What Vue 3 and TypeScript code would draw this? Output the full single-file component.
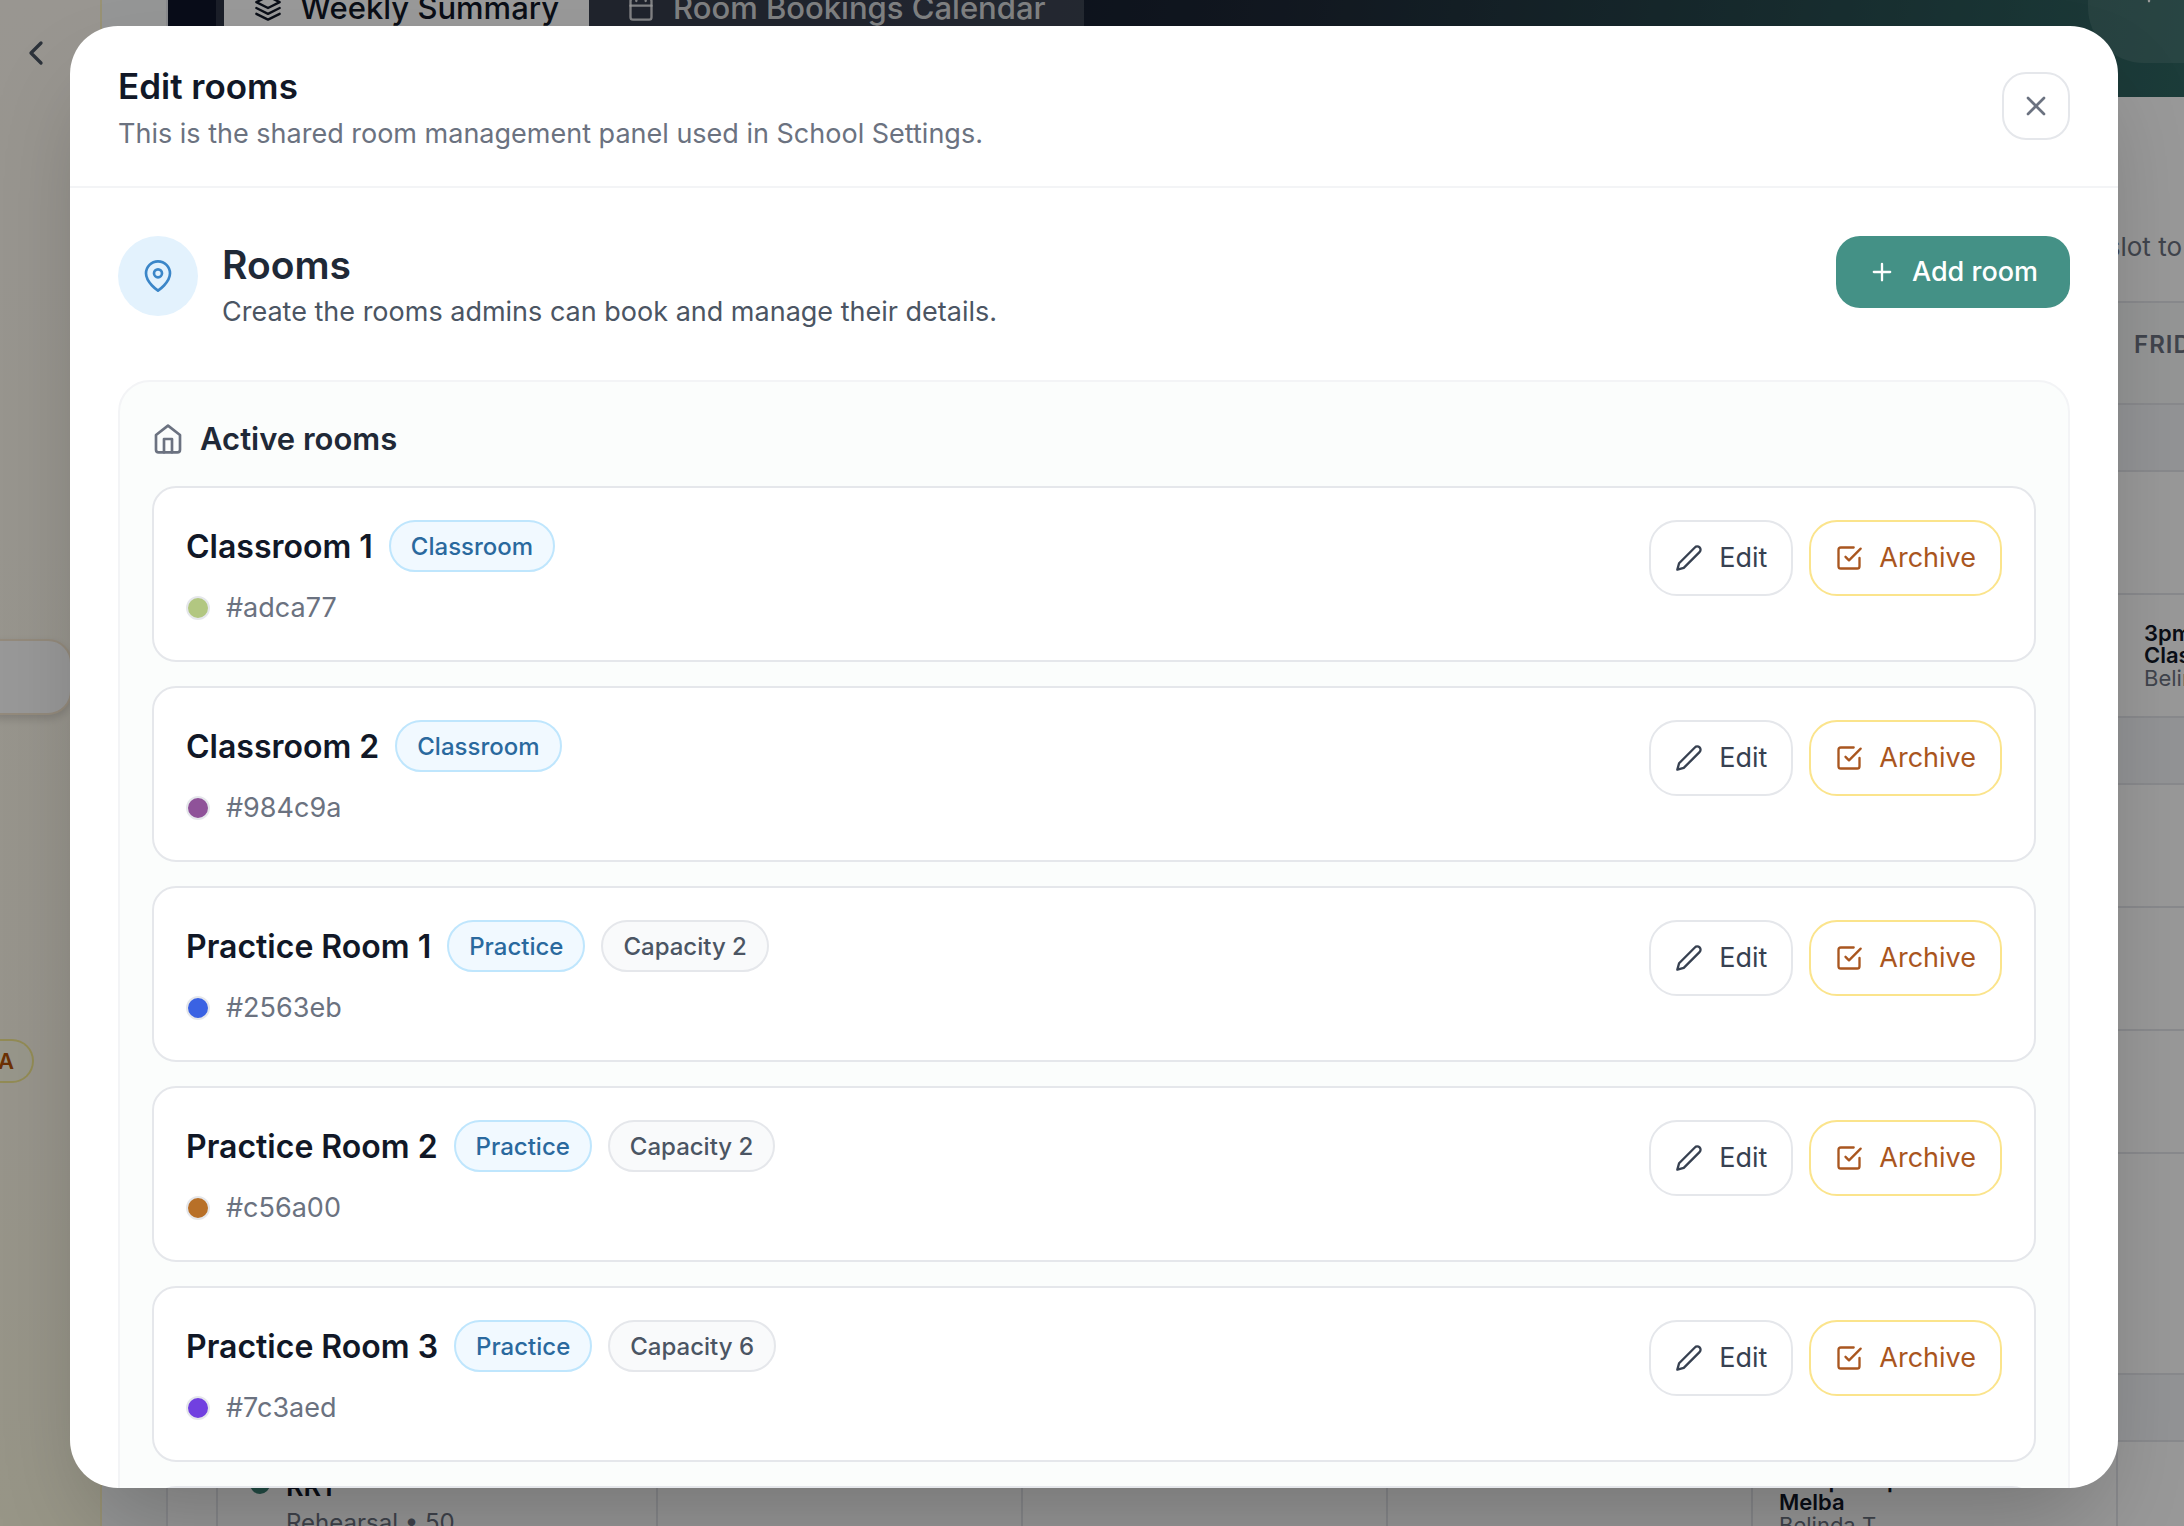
<script setup lang="ts">
interface Room {
  name: string
  kind: string
  capacity?: number
  color: string
  swatch: string
}

interface CalendarCell {
  time: string
  title: string
  person: string
}

interface CalendarRow {
  size: 'band' | 'slot' | 'tall'
  friday?: CalendarCell
}

const rooms: Room[] = [
  { name: 'Classroom 1', kind: 'Classroom', color: '#adca77', swatch: '#b2c781' },
  { name: 'Classroom 2', kind: 'Classroom', color: '#984c9a', swatch: '#8f5299' },
  { name: 'Practice Room 1', kind: 'Practice', capacity: 2, color: '#2563eb', swatch: '#3a62e3' },
  { name: 'Practice Room 2', kind: 'Practice', capacity: 2, color: '#c56a00', swatch: '#b87028' },
  { name: 'Practice Room 3', kind: 'Practice', capacity: 6, color: '#7c3aed', swatch: '#7140e0' },
]

const calendarRows: CalendarRow[] = [
  { size: 'band' },
  { size: 'slot' },
  { size: 'slot', friday: { time: '3pm', title: 'Classroom', person: 'Belinda T' } },
  { size: 'band' },
  { size: 'slot' },
  { size: 'slot' },
  { size: 'slot' },
  { size: 'tall' },
  { size: 'band' },
]
</script>

<template>
  <div class="app">
    <aside class="sidebar">
      <button class="collapse" type="button" aria-label="Collapse sidebar">
        <svg class="icon-xl" viewBox="0 0 24 24"><path d="M15 18l-6-6 6-6" /></svg>
      </button>
      <div class="side-card"></div>
      <span class="side-pill">A</span>
    </aside>

    <main class="main">
      <div class="board">
        <header class="hero">
          <nav class="tabs">
            <button class="tab tab-active" type="button">
              <svg class="icon-md" viewBox="0 0 24 24">
                <path d="M12 2 2 7l10 5 10-5-10-5z" />
                <path d="M2 12l10 5 10-5" />
                <path d="M2 17l10 5 10-5" />
              </svg>
              Weekly Summary
            </button>
            <button class="tab" type="button">
              <svg class="icon-md" viewBox="0 0 24 24">
                <rect x="3" y="4" width="18" height="18" rx="2" />
                <path d="M16 2v4M8 2v4M3 10h18" />
              </svg>
              Room Bookings Calendar
            </button>
          </nav>
          <button class="hero-action" type="button" aria-label="Add booking">
            <svg class="icon-md" viewBox="0 0 24 24"><path d="M12 5v14M5 12h14" /></svg>
          </button>
        </header>
        <p class="hint">slot to</p>

        <table class="calendar">
          <colgroup>
            <col class="col-room" />
            <col v-for="n in 5" :key="n" class="col-day" />
          </colgroup>
          <thead>
            <tr class="row-head">
              <th colspan="5"></th>
              <th scope="col">Friday</th>
            </tr>
          </thead>
          <tbody>
            <tr v-for="(row, i) in calendarRows" :key="i" :class="'row-' + row.size">
              <td colspan="5"></td>
              <td>
                <div v-if="row.friday" class="booking">
                  <strong>{{ row.friday.time }}</strong>
                  <strong>{{ row.friday.title }}</strong>
                  <span>{{ row.friday.person }}</span>
                </div>
              </td>
            </tr>
            <tr class="row-last">
              <th scope="row">
                <div class="room-label">
                  <span class="room-dot"></span>
                  <div>
                    <div class="room-code">RR1</div>
                    <div class="room-note">Rehearsal • 50</div>
                  </div>
                </div>
              </th>
              <td></td>
              <td></td>
              <td></td>
              <td>
                <div class="booking">
                  <strong>3:30pm-4pm</strong>
                  <strong>Melba</strong>
                  <span>Belinda T</span>
                </div>
              </td>
              <td></td>
            </tr>
          </tbody>
        </table>
      </div>
    </main>

    <div class="overlay">
      <section class="modal" role="dialog" aria-modal="true" aria-labelledby="dialog-title">
        <header class="modal-head">
          <div>
            <h1 id="dialog-title">Edit rooms</h1>
            <p>This is the shared room management panel used in School Settings.</p>
          </div>
          <button class="close" type="button" aria-label="Close">
            <svg class="icon-lg" viewBox="0 0 24 24"><path d="M18 6 6 18M6 6l12 12" /></svg>
          </button>
        </header>

        <div class="modal-body">
          <div class="intro">
            <span class="intro-icon">
              <svg class="icon-lg" viewBox="0 0 24 24">
                <path d="M21 10c0 7-9 13-9 13s-9-6-9-13a9 9 0 0 1 18 0z" />
                <circle cx="12" cy="10" r="3" />
              </svg>
            </span>
            <div class="intro-text">
              <h2>Rooms</h2>
              <p>Create the rooms admins can book and manage their details.</p>
            </div>
            <button class="add" type="button">
              <svg class="icon-md" viewBox="0 0 24 24"><path d="M12 5v14M5 12h14" /></svg>
              Add room
            </button>
          </div>

          <section class="panel">
            <h3>
              <svg class="icon-lg" viewBox="0 0 24 24">
                <path d="M3 9l9-7 9 7v11a2 2 0 0 1-2 2H5a2 2 0 0 1-2-2z" />
                <path d="M9 22V12h6v10" />
              </svg>
              Active rooms
            </h3>
            <ul class="rooms">
              <li v-for="room in rooms" :key="room.name" class="room">
                <div class="room-info">
                  <div class="room-title">
                    <h4>{{ room.name }}</h4>
                    <span class="badge badge-kind">{{ room.kind }}</span>
                    <span v-if="room.capacity" class="badge">Capacity {{ room.capacity }}</span>
                  </div>
                  <div class="room-color">
                    <span class="swatch" :style="{ backgroundColor: room.swatch }"></span>
                    {{ room.color }}
                  </div>
                </div>
                <div class="actions">
                  <button class="action" type="button">
                    <svg class="icon-md" viewBox="0 0 24 24">
                      <path d="M17 3a2.83 2.83 0 1 1 4 4L7.5 20.5 2 22l1.5-5.5z" />
                    </svg>
                    Edit
                  </button>
                  <button class="action action-archive" type="button">
                    <svg class="icon-md" viewBox="0 0 24 24">
                      <path d="M9 11l3 3L22 4" />
                      <path d="M21 12v7a2 2 0 0 1-2 2H5a2 2 0 0 1-2-2V5a2 2 0 0 1 2-2h11" />
                    </svg>
                    Archive
                  </button>
                </div>
              </li>
              <li class="room"></li>
            </ul>
          </section>
        </div>
      </section>
    </div>
  </div>
</template>

<style>
body {
  margin: 0;
}
</style>

<style scoped>
* {
  box-sizing: border-box;
}

.app {
  position: relative;
  display: flex;
  height: 100vh;
  overflow: hidden;
  background: #f9fafb;
  color: #111827;
  font-family: Inter, "Liberation Sans", sans-serif;
  font-size: 27px;
  line-height: 40px;
}

h1,
h2,
h3,
h4,
p,
ul {
  margin: 0;
  padding: 0;
  font-weight: 400;
}

button {
  display: inline-flex;
  align-items: center;
  font: inherit;
  color: inherit;
  cursor: pointer;
}

svg {
  flex: none;
  fill: none;
  stroke: currentColor;
  stroke-width: 2;
  stroke-linecap: round;
  stroke-linejoin: round;
}

.icon-md {
  width: 28px;
  height: 28px;
}

.icon-lg {
  width: 32px;
  height: 32px;
}

.icon-xl {
  width: 40px;
  height: 40px;
}

/* Page behind the dialog */
.sidebar {
  display: flex;
  flex: none;
  flex-direction: column;
  align-items: flex-start;
  width: 102px;
  border-right: 2px solid #fdf3c4;
  background: linear-gradient(#fffbf2, #fef9ea 70%, #fdfae2);
}

.collapse {
  margin: 33px 0 0 16px;
  padding: 0;
  border: 0;
  background: none;
  color: #4b5563;
}

.side-card {
  width: 96px;
  height: 76px;
  margin: 566px 0 324px -24px;
  border: 2px solid #f7e8d0;
  border-radius: 24px;
  background: #fff;
  box-shadow: 0 4px 8px rgba(0, 0, 0, 0.15);
}

.side-pill {
  height: 44px;
  margin-left: -26px;
  padding: 0 18px 0 24px;
  border: 2px solid #f5ea90;
  border-left: 0;
  border-radius: 22px;
  background: #fefce8;
  color: #b45309;
  font-size: 22px;
  font-weight: 600;
}

.main {
  flex: 1;
  min-width: 0;
  padding-left: 64px;
}

.board {
  height: 100%;
  overflow: hidden;
  border-left: 2px solid #e5e7eb;
  background: #fff;
}

.hero {
  display: flex;
  align-items: flex-start;
  justify-content: space-between;
  height: 97px;
  padding-left: 48px;
  overflow: hidden;
  background: linear-gradient(100deg, #0f172a 30%, #1f2937 55%, #2f6561 100%);
}

.tabs {
  display: flex;
  margin-top: -36px;
  padding: 8px 0 8px 8px;
  background: rgba(255, 255, 255, 0.13);
}

.tab {
  gap: 18px;
  height: 72px;
  padding: 0 38px;
  border: 0;
  background: rgba(255, 255, 255, 0.04);
  color: rgba(255, 255, 255, 0.8);
  font-size: 31px;
  font-weight: 500;
}

.tab-active {
  padding: 0 30px;
  background: #fff;
  color: #111827;
}

.hero-action {
  align-items: flex-start;
  width: 96px;
  height: 84px;
  margin-top: -21px;
  padding: 0 0 0 47px;
  border: 0;
  border-bottom-left-radius: 56px;
  background: rgba(255, 255, 255, 0.1);
  color: #fff;
}

.hint {
  height: 204px;
  padding: 130px 2px 0 0;
  color: #6b7280;
  font-size: 26px;
  text-align: right;
}

.calendar {
  width: 2265px;
  margin-left: 48px;
  border-collapse: collapse;
  table-layout: fixed;
}

.col-room {
  width: 440px;
}

.col-day {
  width: 365px;
}

.calendar th,
.calendar td {
  padding: 0;
  border: 2px solid #e5e7eb;
  text-align: left;
  vertical-align: top;
}

.row-head th {
  height: 102px;
  padding: 22px 16px 0;
  background: #f9fafb;
  color: #6b7280;
  font-size: 24px;
  font-weight: 600;
  letter-spacing: 1px;
  text-transform: uppercase;
}

.row-band td {
  height: 67px;
  background: #f5f7fa;
}

.row-slot td {
  height: 123px;
}

.row-tall td {
  height: 221px;
}

.row-last td,
.row-last th {
  height: 123px;
}

.booking {
  display: flex;
  flex-direction: column;
  padding: 27px 26px 16px;
  font-size: 22px;
  line-height: 22px;
}

.booking strong {
  font-weight: 600;
}

.booking span {
  color: #6b7280;
  line-height: 24px;
}

.room-label {
  display: flex;
  gap: 16px;
  padding: 29px 32px;
}

.room-dot {
  width: 20px;
  height: 20px;
  margin-top: 3px;
  border-radius: 50%;
  background: #3b8276;
}

.room-code {
  font-size: 27px;
  font-weight: 600;
  line-height: 32px;
}

.room-note {
  color: #6b7280;
  font-size: 24px;
  font-weight: 400;
}

/* Dialog */
.overlay {
  position: absolute;
  inset: 0;
  padding: 26px 66px 38px 70px;
  background: rgba(0, 0, 0, 0.4);
}

.modal {
  display: flex;
  flex-direction: column;
  height: 100%;
  overflow: hidden;
  border-radius: 48px;
  background: #fff;
  box-shadow: 0 50px 100px -24px rgba(0, 0, 0, 0.25);
}

.modal-head {
  display: flex;
  flex: none;
  align-items: center;
  justify-content: space-between;
  height: 162px;
  padding: 0 48px;
  border-bottom: 2px solid #f3f4f6;
}

h1 {
  font-size: 35px;
  font-weight: 600;
  line-height: 56px;
}

.modal-head p {
  color: #6b7280;
}

.close {
  justify-content: center;
  width: 68px;
  height: 68px;
  padding: 0;
  border: 2px solid #e5e7eb;
  border-radius: 24px;
  background: #fff;
  color: #6b7280;
}

.modal-body {
  flex: 1;
  min-height: 0;
  padding: 48px;
  overflow: hidden;
}

.intro {
  display: flex;
  align-items: flex-start;
  height: 144px;
}

.intro-icon {
  display: flex;
  align-items: center;
  justify-content: center;
  width: 80px;
  height: 80px;
  border-radius: 50%;
  background: #e3f2fd;
  color: #3b86c8;
}

.intro-text {
  flex: 1;
  padding: 2px 24px 0;
}

h2 {
  color: #1f2937;
  font-size: 39px;
  font-weight: 600;
  line-height: 54px;
}

.intro-text p {
  color: #4b5563;
}

.add {
  gap: 16px;
  height: 72px;
  padding: 0 32px;
  border: 0;
  border-radius: 24px;
  background: #449186;
  color: #fff;
  font-weight: 500;
}

.panel {
  padding: 32px;
  border: 2px solid #f3f4f6;
  border-radius: 32px;
  background: #fbfdfc;
}

h3 {
  display: flex;
  align-items: center;
  gap: 16px;
  height: 50px;
  margin-bottom: 22px;
  color: #1f2937;
  font-size: 31px;
  font-weight: 600;
}

h3 svg {
  color: #6b7280;
}

.rooms {
  display: flex;
  flex-direction: column;
  gap: 24px;
  list-style: none;
}

.room {
  display: flex;
  align-items: flex-start;
  justify-content: space-between;
  min-height: 176px;
  padding: 32px;
  border: 2px solid #e5e7eb;
  border-radius: 24px;
  background: #fff;
}

.room-title {
  display: flex;
  align-items: center;
  gap: 16px;
  margin-bottom: 16px;
}

h4 {
  padding-top: 2px;
  font-size: 32px;
  font-weight: 600;
}

.badge {
  height: 52px;
  padding: 0 20px;
  border: 2px solid #e5e7eb;
  border-radius: 26px;
  background: #f9fafb;
  color: #4b5563;
  font-size: 24px;
  font-weight: 500;
  line-height: 50px;
}

.badge-kind {
  border-color: #bfe6fd;
  background: #f1f9ff;
  color: #2a699e;
}

.room-color {
  display: flex;
  align-items: center;
  gap: 16px;
  color: #6b7280;
}

.swatch {
  width: 24px;
  height: 24px;
  border: 2px solid #e5e7eb;
  border-radius: 50%;
}

.actions {
  display: flex;
  gap: 16px;
}

.action {
  gap: 16px;
  height: 76px;
  padding: 0 24px;
  border: 2px solid #e5e7eb;
  border-radius: 28px;
  background: #fff;
  color: #374151;
}

.action-archive {
  border-color: #fbe48c;
  color: #a9561f;
}
</style>
